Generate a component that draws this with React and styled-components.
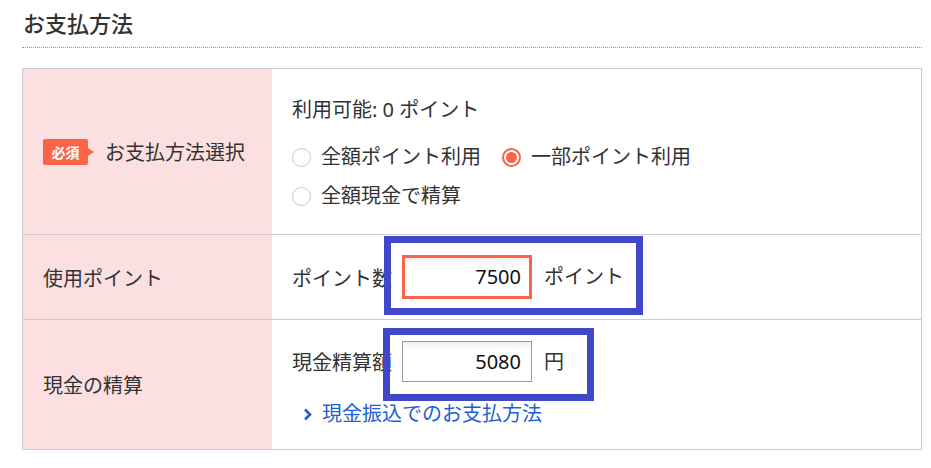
import styled, { createGlobalStyle } from 'styled-components'

const GlobalStyle = createGlobalStyle`
  body {
    margin: 0;
    background: #fff;
    font-family: "Noto Sans", "Noto Sans CJK JP", sans-serif;
    color: #333;
  }
`;

const Page = styled.div`
  width: 900px;
  margin-left: 22px;
`;

const Title = styled.h2`
  margin: 0;
  padding: 8px 0 8px 1px;
  font-size: 22px;
  font-weight: 500;
  line-height: 31px;
  border-bottom: 1px dotted #999;
`;

const Table = styled.div`
  margin-top: 20px;
  border: 1px solid #ccc;
  display: grid;
  grid-template-columns: 249px 1fr;
`;

const Head = styled.div`
  background: #fce0e1;
  display: flex;
  align-items: center;
  padding-left: 20px;
  font-size: 20px;
  border-top: ${p => (p.first ? 'none' : '1px solid #ccc')};
`;

const Cell = styled.div`
  padding: ${p => p.pad || '20px 20px'};
  font-size: 20px;
  border-top: ${p => (p.first ? 'none' : '1px solid #ccc')};
  display: flex;
  flex-direction: column;
  justify-content: center;
`;

const Badge = styled.span`
  position: relative;
  display: inline-flex;
  align-items: center;
  justify-content: center;
  width: 45px;
  height: 26px;
  border-radius: 2px;
  background: #fa6449;
  color: #fff;
  font-size: 14px;
  font-weight: bold;
  margin-right: 17px;

  &::after {
    content: '';
    position: absolute;
    right: -6px;
    top: 9px;
    border-left: 6px solid #fa6449;
    border-top: 4px solid transparent;
    border-bottom: 4px solid transparent;
  }
`;

const Line = styled.div`
  line-height: 28px;
  margin-bottom: ${p => p.mb || 0};
`;

const RadioRow = styled.div`
  display: flex;
  flex-wrap: wrap;
  width: 430px;
  column-gap: 21px;
  row-gap: 11px;
`;

const RadioLabel = styled.label`
  display: flex;
  align-items: center;
  gap: 10px;
  line-height: 28px;
`;

const RadioMark = styled.span`
  width: 19px;
  height: 19px;
  box-sizing: border-box;
  border-radius: 50%;
  border: ${p => (p.checked ? '2px solid #fa6449' : '1px solid #ccc')};
  background: #fff;
  display: flex;
  align-items: center;
  justify-content: center;

  &::after {
    content: '';
    display: ${p => (p.checked ? 'block' : 'none')};
    width: 11px;
    height: 11px;
    border-radius: 50%;
    background: #fa6449;
  }
`;

const Field = styled.div`
  display: flex;
  align-items: center;
`;

const FieldLabel = styled.span`
  width: 110px;
  white-space: nowrap;
`;

const InputGroup = styled.div`
  position: relative;
  display: flex;
  align-items: center;
`;

const NumInput = styled.div`
  box-sizing: border-box;
  width: 130px;
  height: ${p => p.h}px;
  border: ${p => (p.active ? '3px solid #fa6449' : '1px solid #999')};
  background: linear-gradient(#f0f0f0, #fff 8px);
  font-size: 20px;
  color: #111;
  text-align: right;
  padding-right: ${p => (p.active ? 8 : 10)}px;
  line-height: ${p => p.h - (p.active ? 6 : 2)}px;
`;

const Unit = styled.span`
  margin-left: 12px;
  line-height: 28px;
`;

const Highlight = styled.div`
  position: absolute;
  left: ${p => p.l}px;
  top: ${p => p.t}px;
  width: ${p => p.w}px;
  height: ${p => p.h}px;
  box-sizing: border-box;
  border: 7px solid #4047c8;
  pointer-events: none;
`;

const Link = styled.a`
  display: flex;
  align-items: center;
  gap: 10px;
  margin-top: 18px;
  padding-left: 11px;
  color: #1f5fd4;
  line-height: 28px;
  text-decoration: none;
`;

function Radio({ checked, children }) {
  return (
    <RadioLabel>
      <RadioMark checked={checked} />
      {children}
    </RadioLabel>
  );
}

function App() {
  return (
    <Page>
      <GlobalStyle />
      <Title>お支払方法</Title>
      <Table>
        <Head first>
          <Badge>必須</Badge>
          お支払方法選択
        </Head>
        <Cell first pad="27px 20px 24px">
          <Line mb="19px">利用可能: 0 ポイント</Line>
          <RadioRow>
            <Radio>全額ポイント利用</Radio>
            <Radio checked>一部ポイント利用</Radio>
            <Radio>全額現金で精算</Radio>
          </RadioRow>
        </Cell>

        <Head>使用ポイント</Head>
        <Cell>
          <Field>
            <FieldLabel>ポイント数</FieldLabel>
            <InputGroup>
              <NumInput active h={44}>7500</NumInput>
              <Unit>ポイント</Unit>
              <Highlight l={-18} t={-19} w={259} h={79} />
            </InputGroup>
          </Field>
        </Cell>

        <Head>現金の精算</Head>
        <Cell pad="21px 20px 21px">
          <Field>
            <FieldLabel>現金精算額</FieldLabel>
            <InputGroup>
              <NumInput h={41}>5080</NumInput>
              <Unit>円</Unit>
              <Highlight l={-19} t={-13} w={211} h={73} />
            </InputGroup>
          </Field>
          <Link href="#">
            <svg width="9" height="13" viewBox="0 0 9 13">
              <polyline points="2,1.5 7,6.5 2,11.5" fill="none" stroke="#1f5fd4" strokeWidth="2.6" />
            </svg>
            現金振込でのお支払方法
          </Link>
        </Cell>
      </Table>
    </Page>
  );
}

export default App;
